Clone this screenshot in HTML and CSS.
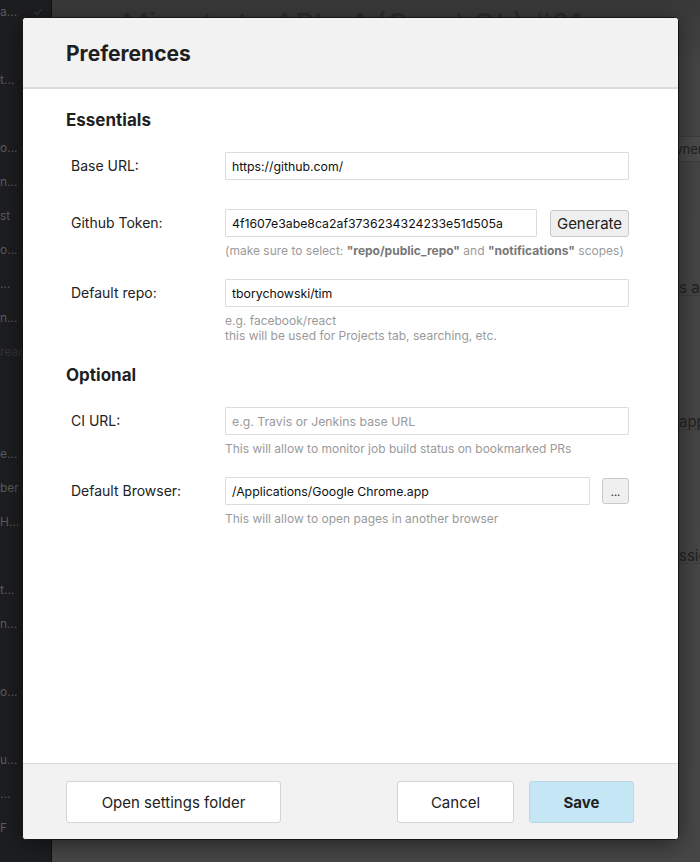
FILE: index.html
```html
<!DOCTYPE html>
<html lang="en">
<head>
    <meta charset="UTF-8">
    <meta name="viewport" content="width=device-width, initial-scale=1.0">
    <title>Preferences</title>
    <link rel="stylesheet" href="styles.css">
</head>
<body>
    <div class="app">
        <div class="sidebar">
            <div class="side-item">a... <span class="check">✓</span></div>
            <div class="side-item"></div>
            <div class="side-item">t...</div>
            <div class="side-item"></div>
            <div class="side-item">o...</div>
            <div class="side-item">n...</div>
            <div class="side-item">st</div>
            <div class="side-item">o...</div>
            <div class="side-item">...</div>
            <div class="side-item">n...</div>
            <div class="side-item dim">reac</div>
            <div class="side-item"></div>
            <div class="side-item"></div>
            <div class="side-item">e...</div>
            <div class="side-item">ber</div>
            <div class="side-item">H...</div>
            <div class="side-item"></div>
            <div class="side-item">t...</div>
            <div class="side-item">n...</div>
            <div class="side-item"></div>
            <div class="side-item">o...</div>
            <div class="side-item"></div>
            <div class="side-item">u...</div>
            <div class="side-item">...</div>
            <div class="side-item">F <span class="check">✓</span></div>
        </div>
        <div class="main">
            <div class="main-title">Migrate to API v4 (GraphQL) #81</div>
            <div class="list">
                <div class="list-head">Owner</div>
                <div class="list-row">s ago</div>
                <div class="list-row">approved</div>
                <div class="list-row">ssigned</div>
            </div>
        </div>
    </div>

    <div class="modal">
        <div class="modal-header">
            <h1>Preferences</h1>
        </div>

        <div class="modal-body">
            <h2>Essentials</h2>

            <div class="field no-hint">
                <label>Base URL:</label>
                <div class="control">
                    <div class="input-row">
                        <input type="text" value="https://github.com/">
                    </div>
                </div>
            </div>

            <div class="field">
                <label>Github Token:</label>
                <div class="control">
                    <div class="input-row">
                        <input type="text" value="4f1607e3abe8ca2af3736234324233e51d505a">
                        <button class="btn-small btn-generate">Generate</button>
                    </div>
                    <p class="hint">(make sure to select: <strong>"repo/public_repo"</strong> and <strong>"notifications"</strong> scopes)</p>
                </div>
            </div>

            <div class="field">
                <label>Default repo:</label>
                <div class="control">
                    <div class="input-row">
                        <input type="text" value="tborychowski/tim">
                    </div>
                    <p class="hint">e.g. facebook/react<br>this will be used for Projects tab, searching, etc.</p>
                </div>
            </div>

            <h2>Optional</h2>

            <div class="field">
                <label>CI URL:</label>
                <div class="control">
                    <div class="input-row">
                        <input type="text" placeholder="e.g. Travis or Jenkins base URL">
                    </div>
                    <p class="hint">This will allow to monitor job build status on bookmarked PRs</p>
                </div>
            </div>

            <div class="field">
                <label>Default Browser:</label>
                <div class="control">
                    <div class="input-row">
                        <input type="text" value="/Applications/Google Chrome.app">
                        <button class="btn-small btn-browse">...</button>
                    </div>
                    <p class="hint">This will allow to open pages in another browser</p>
                </div>
            </div>
        </div>

        <div class="modal-footer">
            <button class="btn btn-folder">Open settings folder</button>
            <div class="footer-right">
                <button class="btn btn-cancel">Cancel</button>
                <button class="btn btn-save">Save</button>
            </div>
        </div>
    </div>
</body>
</html>
```

FILE: styles.css
```css
* {
    margin: 0;
    padding: 0;
    box-sizing: border-box;
}

body {
    font-family: 'Inter', 'Roboto', 'Liberation Sans', sans-serif;
    background: #474747;
    height: 100vh;
    overflow: hidden;
    color: #222;
}

/* dimmed app behind the dialog */

.app {
    display: flex;
    height: 100vh;
}

.sidebar {
    flex: 0 0 52px;
    background: #1d1e20;
    border-right: 1px solid #111;
    padding-top: 4px;
    overflow: hidden;
}

.side-item {
    height: 34px;
    line-height: 16px;
    font-size: 12px;
    color: #5b5b5d;
    white-space: nowrap;
}

.side-item.dim {
    color: #343436;
}

.check {
    margin-left: 12px;
    color: #3a3a3c;
}

.main {
    flex: 1;
    min-width: 0;
    overflow: hidden;
    display: flex;
    flex-direction: column;
    background: linear-gradient(180deg, #393939 0%, #454545 60px, #474747 100%);
}

.main-title {
    font-size: 30px;
    color: #2d2d2d;
    padding: 6px 0 0 70px;
    height: 30px;
    overflow: hidden;
    white-space: nowrap;
}

.list {
    margin-left: 100px;
    margin-top: 106px;
    border-left: 1px solid #3c3c3c;
}

.list-head {
    height: 26px;
    line-height: 24px;
    padding-left: 509px;
    font-size: 13px;
    color: #222;
    border-top: 1px solid #3d3d3d;
    border-bottom: 1px solid #3d3d3d;
    background: #4a4a4a;
    white-space: nowrap;
}

.list-row {
    height: 134px;
    line-height: 252px;
    padding-left: 526px;
    font-size: 15px;
    color: #222;
    border-bottom: 1px solid #3f3f3f;
    white-space: nowrap;
}

/* dialog */

.modal {
    position: absolute;
    top: 17px;
    left: 22px;
    width: 657px;
    height: 823px;
    background: white;
    border: 1px solid #151515;
    border-radius: 4px;
    box-shadow: 0 4px 24px rgba(0,0,0,0.5);
    display: flex;
    flex-direction: column;
    overflow: hidden;
}

.modal-header {
    height: 71px;
    background: #f2f2f2;
    border-bottom: 2px solid #dcdcdc;
    display: flex;
    align-items: center;
    padding: 0 43px;
}

.modal-header h1 {
    font-size: 21px;
    font-weight: 700;
    color: #1f1f1f;
    padding-top: 1px;
}

.modal-body {
    flex: 1;
    padding: 20px 49px 0 43px;
}

.modal-body h2 {
    font-size: 17px;
    font-weight: 700;
    color: #1f1f1f;
    line-height: 22px;
    margin-bottom: 21px;
}

.field {
    display: grid;
    grid-template-columns: 154px 1fr;
    padding-left: 5px;
    margin-bottom: 21px;
}

.field.no-hint {
    margin-bottom: 29px;
}

.field label {
    font-size: 14px;
    color: #222;
    line-height: 28px;
}

.input-row {
    display: flex;
    align-items: center;
}

.input-row input {
    flex: 1;
    min-width: 0;
    height: 28px;
    border: 1px solid #dcdcdc;
    border-radius: 1px;
    padding: 0 6px;
    font-family: inherit;
    font-size: 12.3px;
    color: #111;
    outline: none;
}

.input-row input::placeholder {
    color: #9a9a9a;
}

.btn-small {
    height: 27px;
    background: #efefef;
    border: 1px solid #c9c9c9;
    border-radius: 3px;
    font-family: inherit;
    color: #222;
}

.btn-generate {
    width: 79px;
    margin-left: 13px;
    font-size: 15px;
}

.btn-browse {
    width: 27px;
    height: 26px;
    margin-left: 12px;
    font-size: 11px;
    padding-top: 2px;
}

.hint {
    margin-top: 6px;
    font-size: 12px;
    line-height: 15px;
    color: #9a9a9a;
    white-space: nowrap;
}

.hint strong {
    color: #777;
}

.modal-footer {
    height: 76px;
    background: #f2f2f2;
    border-top: 1px solid #d9d9d9;
    display: flex;
    align-items: center;
    justify-content: space-between;
    padding: 1px 44px 0 43px;
}

.footer-right {
    display: flex;
    gap: 15px;
}

.btn {
    height: 42px;
    background: white;
    border: 1px solid #d4d4d4;
    border-radius: 3px;
    font-family: inherit;
    font-size: 15px;
    color: #222;
}

.btn-folder {
    width: 215px;
}

.btn-cancel {
    width: 117px;
}

.btn-save {
    width: 105px;
    background: #c5e6f5;
    border-color: #bcd7e3;
    font-weight: 700;
}
```
